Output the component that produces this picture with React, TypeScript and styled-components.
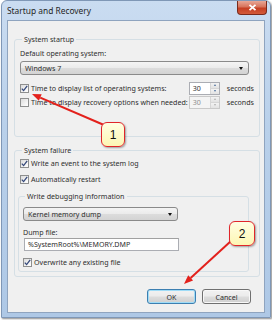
import React from "react";
import styled, { createGlobalStyle } from "styled-components";

const GlobalStyle = createGlobalStyle`
  html, body {
    margin: 0;
    padding: 0;
    background: #ffffff;
  }
  body {
    width: 272px;
    height: 320px;
    overflow: hidden;
    font-family: "Noto Sans", "Liberation Sans", sans-serif;
  }
`;

// Window chrome
const Window = styled.div`
  position: relative;
  box-sizing: border-box;
  width: 270px;
  height: 318px;
  margin-left: 1px;
  display: flex;
  flex-direction: column;
  border: 1px solid #7f97b6;
  border-radius: 6px 6px 0 0;
  background: linear-gradient(180deg, #cadcf1 0%, #b9d0ea 40%, #aec8e6 100%);
  box-shadow: 1px 1px 2px rgba(0, 0, 0, 0.45);
`;

const TitleBar = styled.div`
  height: 19px;
  display: flex;
  justify-content: space-between;
  align-items: flex-start;
`;

const Title = styled.div`
  padding: 4px 0 0 5px;
  font-size: 8.4px;
  line-height: 11px;
  color: #262626;
`;

const CloseButton = styled.div`
  width: 30px;
  height: 14px;
  margin-right: 3px;
  box-sizing: border-box;
  display: flex;
  align-items: center;
  justify-content: center;
  border: 1px solid #7a2a1c;
  border-top: none;
  border-radius: 0 0 4px 4px;
  background: linear-gradient(180deg, #e8a796 0%, #d7735b 45%, #c53f23 55%, #d35a3a 100%);
`;

const Client = styled.div`
  flex: 1;
  margin: 0 5px 4px 5px;
  display: flex;
  flex-direction: column;
  padding: 13px 4px 0 6px;
  background: #f0f0f0;
  border: 1px solid #8fa4bf;
  font-size: 7.1px;
  color: #2e2e2e;
`;

// Group boxes
const Group = styled.fieldset<{ $inset?: boolean }>`
  margin: ${(p) => (p.$inset ? "6px 5px 0 -2px" : "0")};
  padding: 0 5px 0 ${(p) => (p.$inset ? "4px" : "5px")};
  min-width: 0;
  border: 1px solid #d5dfe5;
  border-radius: 3px;
  display: flex;
  flex-direction: column;
`;

const Legend = styled.legend`
  padding: 0 2px;
  margin-left: 2px;
  font-size: 7.1px;
  line-height: 10px;
  color: #2e2e2e;
`;

const Label = styled.div<{ $top?: number }>`
  margin-top: ${(p) => p.$top ?? 0}px;
  line-height: 10px;
`;

const Select = styled.div<{ $width: number; $top?: number }>`
  box-sizing: border-box;
  width: ${(p) => p.$width}px;
  height: 14px;
  margin-top: ${(p) => p.$top ?? 0}px;
  padding: 0 5px 0 4px;
  display: flex;
  align-items: center;
  justify-content: space-between;
  border: 1px solid #8a8a8a;
  border-radius: 3px;
  background: linear-gradient(180deg, #f4f4f4 0%, #ebebeb 48%, #dcdcdc 52%, #d3d3d3 100%);
`;

const Caret = styled.span`
  width: 0;
  height: 0;
  border-left: 2.5px solid transparent;
  border-right: 2.5px solid transparent;
  border-top: 3px solid #111;
`;

const Row = styled.div<{ $top?: number }>`
  height: 12px;
  margin-top: ${(p) => p.$top ?? 0}px;
  display: flex;
  align-items: center;
  justify-content: space-between;
`;

const CheckLabel = styled.label<{ $disabled?: boolean }>`
  display: flex;
  align-items: center;
  gap: 2px;
  color: ${(p) => (p.$disabled ? "#8a8a8a" : "#2e2e2e")};
  line-height: 10px;
`;

const Box = styled.span`
  box-sizing: border-box;
  width: 9px;
  height: 9px;
  display: flex;
  align-items: center;
  justify-content: center;
  border: 1px solid #8e8f8f;
  background: linear-gradient(135deg, #dcdcdc 0%, #f6f6f6 70%, #ffffff 100%);
`;

const SpinGroup = styled.div`
  display: flex;
  align-items: center;
  gap: 7px;
`;

const Spin = styled.div<{ $disabled?: boolean }>`
  box-sizing: border-box;
  width: 31px;
  height: 13px;
  display: flex;
  border: 1px solid ${(p) => (p.$disabled ? "#c9c9c9" : "#abadb3")};
  background: ${(p) => (p.$disabled ? "#f4f4f4" : "#ffffff")};
  color: ${(p) => (p.$disabled ? "#8d8d8d" : "#2e2e2e")};
`;

const SpinValue = styled.div`
  flex: 1;
  padding-left: 3px;
  line-height: 11px;
`;

const SpinArrows = styled.div<{ $disabled?: boolean }>`
  width: 8px;
  display: flex;
  flex-direction: column;
  border-left: 1px solid #d6d6d6;
  & > span {
    flex: 1;
    display: flex;
    align-items: center;
    justify-content: center;
    background: linear-gradient(180deg, #f3f3f3, #e2e2e2);
  }
  & > span + span {
    border-top: 1px solid #d6d6d6;
  }
  i {
    width: 0;
    height: 0;
    border-left: 1.5px solid transparent;
    border-right: 1.5px solid transparent;
  }
  span:first-child i {
    border-bottom: 2px solid ${(p) => (p.$disabled ? "#b0b0b0" : "#4b6f9c")};
  }
  span:last-child i {
    border-top: 2px solid ${(p) => (p.$disabled ? "#b0b0b0" : "#4b6f9c")};
  }
`;

const Seconds = styled.span<{ $disabled?: boolean }>`
  color: ${(p) => (p.$disabled ? "#8a8a8a" : "#2e2e2e")};
`;

const TextInput = styled.div`
  box-sizing: border-box;
  width: 155px;
  height: 13px;
  margin: 1px 0 0 1px;
  padding-left: 3px;
  line-height: 11px;
  border: 1px solid #abadb3;
  border-top-color: #a0a0a0;
  background: #ffffff;
`;

const ButtonRow = styled.div`
  margin-top: 12px;
  padding-right: 9px;
  display: flex;
  justify-content: flex-end;
  gap: 6px;
`;

const Button = styled.div<{ $primary?: boolean }>`
  box-sizing: border-box;
  width: 49px;
  height: 15px;
  display: flex;
  align-items: center;
  justify-content: center;
  border: 1px solid ${(p) => (p.$primary ? "#3c7fb1" : "#707070")};
  border-radius: 3px;
  background: linear-gradient(180deg, #f2f2f2 0%, #ebebeb 48%, #dddddd 52%, #cfcfcf 100%);
  box-shadow: inset 0 0 0 1px ${(p) => (p.$primary ? "#9fdcf7" : "#f8f8f8")};
  color: #2e2e2e;
`;

// Annotations laid over the screenshot
const Overlay = styled.svg`
  position: absolute;
  left: 0;
  top: 0;
  pointer-events: none;
`;

const Callout = styled.div<{ $x: number; $y: number; $w: number; $h: number }>`
  position: absolute;
  left: ${(p) => p.$x}px;
  top: ${(p) => p.$y}px;
  width: ${(p) => p.$w}px;
  height: ${(p) => p.$h}px;
  box-sizing: border-box;
  display: flex;
  align-items: center;
  justify-content: center;
  border: 1.5px solid #e0262a;
  border-radius: 6px;
  background: linear-gradient(180deg, #ffffe2 0%, #fdf6b4 100%);
  box-shadow: 1px 1px 2px rgba(0, 0, 0, 0.35);
  font-family: "Liberation Sans", Arial, sans-serif;
  font-size: 12px;
  color: #111;
`;

const Check = ({ on = true }: { on?: boolean }) => (
  <Box>
    {on && (
      <svg width="7" height="7" viewBox="0 0 7 7">
        <path d="M0.8 3.6 L2.6 5.6 L6.2 0.9" fill="none" stroke="#34487a" strokeWidth="1.3" />
      </svg>
    )}
  </Box>
);

const Spinner = ({ value, disabled }: { value: string; disabled?: boolean }) => (
  <Spin $disabled={disabled}>
    <SpinValue>{value}</SpinValue>
    <SpinArrows $disabled={disabled}>
      <span><i /></span>
      <span><i /></span>
    </SpinArrows>
  </Spin>
);

const Arrow = ({ x1, y1, x2, y2 }: { x1: number; y1: number; x2: number; y2: number }) => {
  const a = Math.atan2(y2 - y1, x2 - x1);
  const len = 9;
  const half = 3.6;
  const bx = x2 - len * Math.cos(a);
  const by = y2 - len * Math.sin(a);
  const p1 = `${bx + half * Math.sin(a)},${by - half * Math.cos(a)}`;
  const p2 = `${bx - half * Math.sin(a)},${by + half * Math.cos(a)}`;
  return (
    <g>
      <line x1={x1} y1={y1} x2={bx} y2={by} stroke="#e3211c" strokeWidth="2" />
      <polygon points={`${x2},${y2} ${p1} ${p2}`} fill="#e3211c" />
    </g>
  );
};

const App = () => {
  return (
    <>
      <GlobalStyle />
      <Window>
        <TitleBar>
          <Title>Startup and Recovery</Title>
          <CloseButton>
            <svg width="9" height="7" viewBox="0 0 9 7">
              <path d="M1.5 0.8 L7.5 6.2 M7.5 0.8 L1.5 6.2" stroke="#ffffff" strokeWidth="1.8" />
            </svg>
          </CloseButton>
        </TitleBar>
        <Client>
          <Group style={{ paddingBottom: 28 }}>
            <Legend>System startup</Legend>
            <Label $top={4}>Default operating system:</Label>
            <Select $width={229} $top={3}>
              <span>Windows 7</span>
              <Caret />
            </Select>
            <Row $top={7}>
              <CheckLabel>
                <Check />
                Time to display list of operating systems:
              </CheckLabel>
              <SpinGroup>
                <Spinner value="30" />
                <Seconds>seconds</Seconds>
              </SpinGroup>
            </Row>
            <Row $top={2}>
              <CheckLabel>
                <Check on={false} />
                Time to display recovery options when needed:
              </CheckLabel>
              <SpinGroup>
                <Spinner value="30" disabled />
                <Seconds>seconds</Seconds>
              </SpinGroup>
            </Row>
          </Group>

          <Group style={{ marginTop: 8, paddingBottom: 4 }}>
            <Legend>System failure</Legend>
            <Row $top={2}>
              <CheckLabel>
                <Check />
                Write an event to the system log
              </CheckLabel>
            </Row>
            <Row $top={4}>
              <CheckLabel>
                <Check />
                Automatically restart
              </CheckLabel>
            </Row>
            <Group $inset style={{ paddingBottom: 3 }}>
              <Legend>Write debugging information</Legend>
              <Select $width={155} $top={6}>
                <span>Kernel memory dump</span>
                <Caret />
              </Select>
              <Label $top={6}>Dump file:</Label>
              <TextInput>%SystemRoot%\MEMORY.DMP</TextInput>
              <Row $top={5}>
                <CheckLabel>
                  <Check />
                  Overwrite any existing file
                </CheckLabel>
              </Row>
            </Group>
          </Group>

          <ButtonRow>
            <Button $primary>OK</Button>
            <Button>Cancel</Button>
          </ButtonRow>
        </Client>

        <Overlay width="270" height="318">
          <Arrow x1={102} y1={124} x2={30} y2={93} />
          <Arrow x1={229} y1={240} x2={182} y2={283} />
        </Overlay>
        <Callout $x={99} $y={121} $w={24} $h={25}>1</Callout>
        <Callout $x={227} $y={220} $w={26} $h={25}>2</Callout>
      </Window>
    </>
  );
};

export default App;
